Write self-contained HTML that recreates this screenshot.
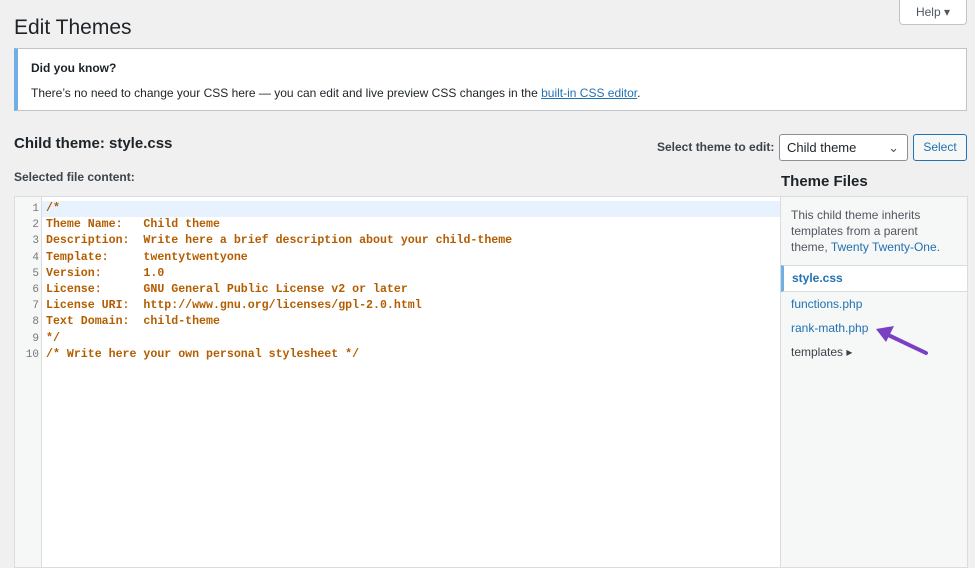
<!DOCTYPE html><html><head><style>
body{margin:0;width:975px;height:561px;background:#f0f0f1;font-family:"Liberation Sans",sans-serif;position:relative;overflow:hidden;color:#1d2327}
.a{position:absolute}
.code{font-family:"Liberation Mono",monospace;font-size:11.6px;font-weight:bold;color:#b35d00;line-height:16.2px;white-space:pre}
.ln{font-family:"Liberation Mono",monospace;font-size:11px;color:#777;line-height:16.2px;text-align:right;white-space:pre}
a{color:#2271b1}
</style></head><body>
<div class="a" style="left:899px;top:0;width:66px;height:24px;background:#fff;border:1px solid #c3c4c7;border-top:0;border-radius:0 0 4px 4px;font-size:12px;color:#50575e;line-height:24px;text-align:center">Help ▾</div>
<div class="a" style="left:14px;top:16px;font-size:21px">Edit Themes</div>
<div class="a" style="left:14px;top:48px;width:948px;height:61px;background:#fff;border:1px solid #c3c4c7;border-left:4px solid #72aee6">
<div class="a" style="left:13px;top:12px;font-size:12px;font-weight:bold">Did you know?</div>
<div class="a" style="left:13px;top:37px;font-size:12px">There’s no need to change your CSS here — you can edit and live preview CSS changes in the <a style="text-decoration:underline">built-in CSS editor</a>.</div></div>
<div class="a" style="left:14px;top:135px;font-size:15px;font-weight:bold">Child theme: style.css</div>
<div class="a" style="left:14px;top:170px;font-size:12px;font-weight:bold;color:#3c434a">Selected file content:</div>
<div class="a" style="left:657px;top:140px;font-size:12px;font-weight:bold;color:#3c434a">Select theme to edit:</div>
<div class="a" style="left:779px;top:134px;width:127px;height:25px;background:#fff;border:1px solid #8c8f94;border-radius:3px;font-size:13px;line-height:25px;text-indent:7px">Child theme<span style="position:absolute;right:8px;top:0;color:#555">⌄</span></div>
<div class="a" style="left:913px;top:134px;width:52px;height:25px;background:#f6f7f7;border:1px solid #2271b1;border-radius:3px;font-size:12px;line-height:25px;text-align:center;color:#2271b1">Select</div>
<div class="a" style="left:781px;top:173px;font-size:15px;font-weight:bold">Theme Files</div>
<div class="a" style="left:14px;top:196px;width:766px;height:370px;background:#fff;border:1px solid #dcdcde">
<div class="a" style="left:0;top:0;width:26px;height:370px;background:#f6f7f7;border-right:1px solid #dcdcde"></div>
<div class="a" style="left:27px;top:4px;width:740px;height:16px;background:#e8f2fe"></div>
<div class="a ln" style="left:0;top:4px;width:24px">1
2
3
4
5
6
7
8
9
10</div>
<div class="a code" style="left:31px;top:4px">/*
Theme Name:   Child theme
Description:  Write here a brief description about your child-theme
Template:     twentytwentyone
Version:      1.0
License:      GNU General Public License v2 or later
License URI:  http://www.gnu.org/licenses/gpl-2.0.html
Text Domain:  child-theme
*/
/* Write here your own personal stylesheet */</div></div>
<div class="a" style="left:780px;top:196px;width:186px;height:370px;background:#f6f7f7;border:1px solid #dcdcde">
<div class="a" style="left:10px;top:10px;font-size:12px;line-height:16px;color:#50575e;width:152px">This child theme inherits templates from a parent theme, <a>Twenty Twenty-One</a>.</div>
<div class="a" style="left:0;top:68px;width:183px;height:25px;background:#fff;border-top:1px solid #dcdcde;border-bottom:1px solid #dcdcde;border-left:3px solid #72aee6;font-size:12px;font-weight:bold;color:#2271b1;line-height:25px;text-indent:8px">style.css</div>
<div class="a" style="left:10px;top:100px;font-size:12px;color:#2271b1">functions.php</div>
<div class="a" style="left:10px;top:124px;font-size:12px;color:#2271b1">rank-math.php</div>
<div class="a" style="left:10px;top:148px;font-size:12px;color:#3c434a">templates ▸</div></div>
<svg class="a" style="left:870px;top:322px" width="65" height="36"><path d="M56 31 L14 11" stroke="#7b3fc4" stroke-width="4" stroke-linecap="round"/><path d="M6 7 L24 4 L16 20 Z" fill="#7b3fc4"/></svg>
</body></html>
